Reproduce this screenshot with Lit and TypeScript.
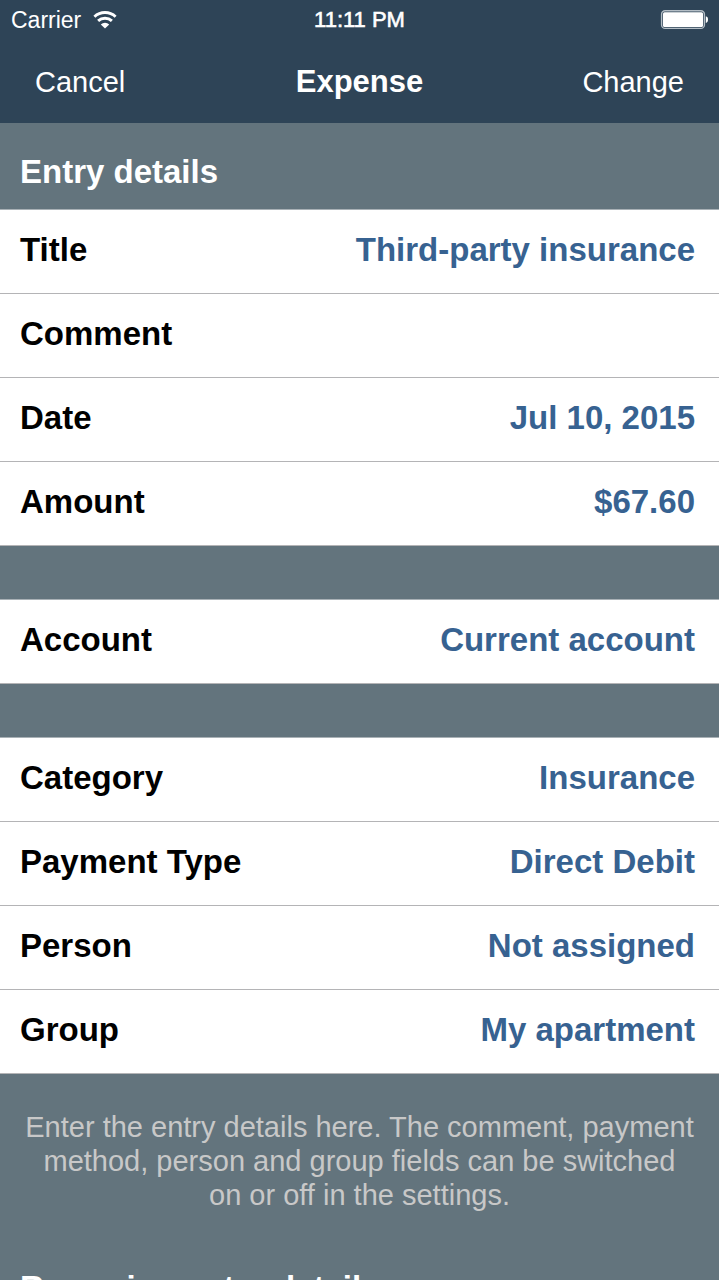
import { LitElement, html, css } from "lit";
import { customElement, property, state } from "lit/decorators.js";

interface Field {
  id: string;
  label: string;
  value: string;
  editable?: boolean;
}

@customElement("status-bar")
class StatusBar extends LitElement {
  static styles = css`
    :host {
      display: grid;
      grid-template-columns: 1fr auto 1fr;
      align-items: center;
      height: 40px;
      padding: 0 11px;
      font-size: 22px;
      line-height: 26px;
    }
    .carrier {
      display: flex;
      align-items: center;
      gap: 12px;
      font-size: 23px;
    }
    .time {
      font-weight: 500;
      -webkit-text-stroke: 0.6px currentColor;
    }
    .battery {
      justify-self: end;
    }
    svg {
      display: block;
    }
  `;

  render() {
    return html`
      <div class="carrier">
        <span>Carrier</span>
        <svg width="24" height="18" viewBox="0 0 24 18" aria-label="Wi-Fi" role="img">
          <g fill="none" stroke="#fff" stroke-width="2.9">
            <path d="M1.4 5.7a15.6 15.6 0 0 1 21.2 0" />
            <path d="M5.1 9.9a10.2 10.2 0 0 1 13.8 0" />
          </g>
          <path fill="#fff" d="M12 17.6 7.8 13.4a6 6 0 0 1 8.4 0z" />
        </svg>
      </div>
      <time class="time">11:11 PM</time>
      <svg class="battery" width="48" height="20" viewBox="0 0 48 20" aria-label="Battery full" role="img">
        <rect x="1.6" y="0.8" width="42.8" height="17.6" rx="3.5" fill="none" stroke="#b4bec6" stroke-width="1.4" />
        <rect x="3" y="2.3" width="40" height="14.6" rx="1.5" fill="#fff" />
        <path fill="#fff" d="M45.8 6.2c1.6.3 2.2 1.5 2.2 3.4s-.6 3.1-2.2 3.4z" />
      </svg>
    `;
  }
}

@customElement("field-group")
class FieldGroup extends LitElement {
  @property({ attribute: false }) fields: Field[] = [];

  static styles = css`
    :host {
      display: block;
      border-top: 1px solid #a9b1b6;
      background: #fff;
    }
    .row {
      display: flex;
      align-items: center;
      gap: 20px;
      box-sizing: border-box;
      height: 84px;
      padding: 0 24px 4px 20px;
      border-bottom: 1px solid #b4b4b6;
      font-size: 33px;
      line-height: 40px;
      font-weight: 700;
    }
    .label {
      flex: none;
      color: #000;
    }
    .value {
      flex: 1;
      min-width: 0;
      margin: 0;
      padding: 0;
      border: 0;
      background: none;
      font: inherit;
      color: #376291;
      text-align: right;
    }
  `;

  render() {
    return this.fields.map(
      (field) => html`
        <div class="row">
          <label class="label" for=${field.id}>${field.label}</label>
          ${field.editable
            ? html`<input class="value" id=${field.id} type="text" autocomplete="off" .value=${field.value} />`
            : html`<button class="value" id=${field.id} type="button">${field.value}</button>`}
        </div>
      `
    );
  }
}

@customElement("app-root")
class AppRoot extends LitElement {
  @state() private entry: Field[] = [
    { id: "title", label: "Title", value: "Third-party insurance", editable: true },
    { id: "comment", label: "Comment", value: "", editable: true },
    { id: "date", label: "Date", value: "Jul 10, 2015" },
    { id: "amount", label: "Amount", value: "$67.60", editable: true },
  ];
  @state() private account: Field[] = [
    { id: "account", label: "Account", value: "Current account" },
  ];
  @state() private details: Field[] = [
    { id: "category", label: "Category", value: "Insurance" },
    { id: "payment", label: "Payment Type", value: "Direct Debit" },
    { id: "person", label: "Person", value: "Not assigned" },
    { id: "group", label: "Group", value: "My apartment" },
  ];

  static styles = css`
    :host {
      display: flex;
      flex-direction: column;
      height: 100vh;
      overflow: hidden;
      background: #63747d;
      color: #fff;
      font-family: "Liberation Sans", Arial, Helvetica, sans-serif;
    }
    .top {
      flex: none;
      background: #2e4457;
    }
    .nav {
      display: grid;
      grid-template-columns: 1fr auto 1fr;
      align-items: center;
      height: 83px;
      padding: 0 35px;
    }
    .action {
      justify-self: start;
      margin: 0;
      padding: 0;
      border: 0;
      background: none;
      color: inherit;
      font: inherit;
      font-size: 29px;
      line-height: 36px;
    }
    .action.end {
      justify-self: end;
    }
    .heading {
      margin: 0;
      font-size: 31px;
      line-height: 36px;
      font-weight: 700;
    }
    .content {
      flex: 1;
      min-height: 0;
      overflow: hidden;
    }
    .section {
      margin: 0;
      padding: 29px 20px 17px;
      font-size: 33px;
      line-height: 40px;
      font-weight: 700;
    }
    .groups {
      display: flex;
      flex-direction: column;
      gap: 53px;
    }
    .hint {
      margin: 0;
      padding: 36px 16px 27px;
      color: #c8c8c8;
      font-size: 29px;
      line-height: 34px;
      text-align: center;
    }
  `;

  render() {
    return html`
      <header class="top">
        <status-bar></status-bar>
        <nav class="nav">
          <button class="action" type="button">Cancel</button>
          <h1 class="heading">Expense</h1>
          <button class="action end" type="button">Change</button>
        </nav>
      </header>
      <main class="content">
        <h2 class="section">Entry details</h2>
        <div class="groups">
          <field-group .fields=${this.entry}></field-group>
          <field-group .fields=${this.account}></field-group>
          <field-group .fields=${this.details}></field-group>
        </div>
        <p class="hint">
          Enter the entry details here. The comment, payment method, person and group fields can be
          switched on&nbsp;or off in the settings.
        </p>
        <h2 class="section">Recurring entry details</h2>
      </main>
    `;
  }
}
